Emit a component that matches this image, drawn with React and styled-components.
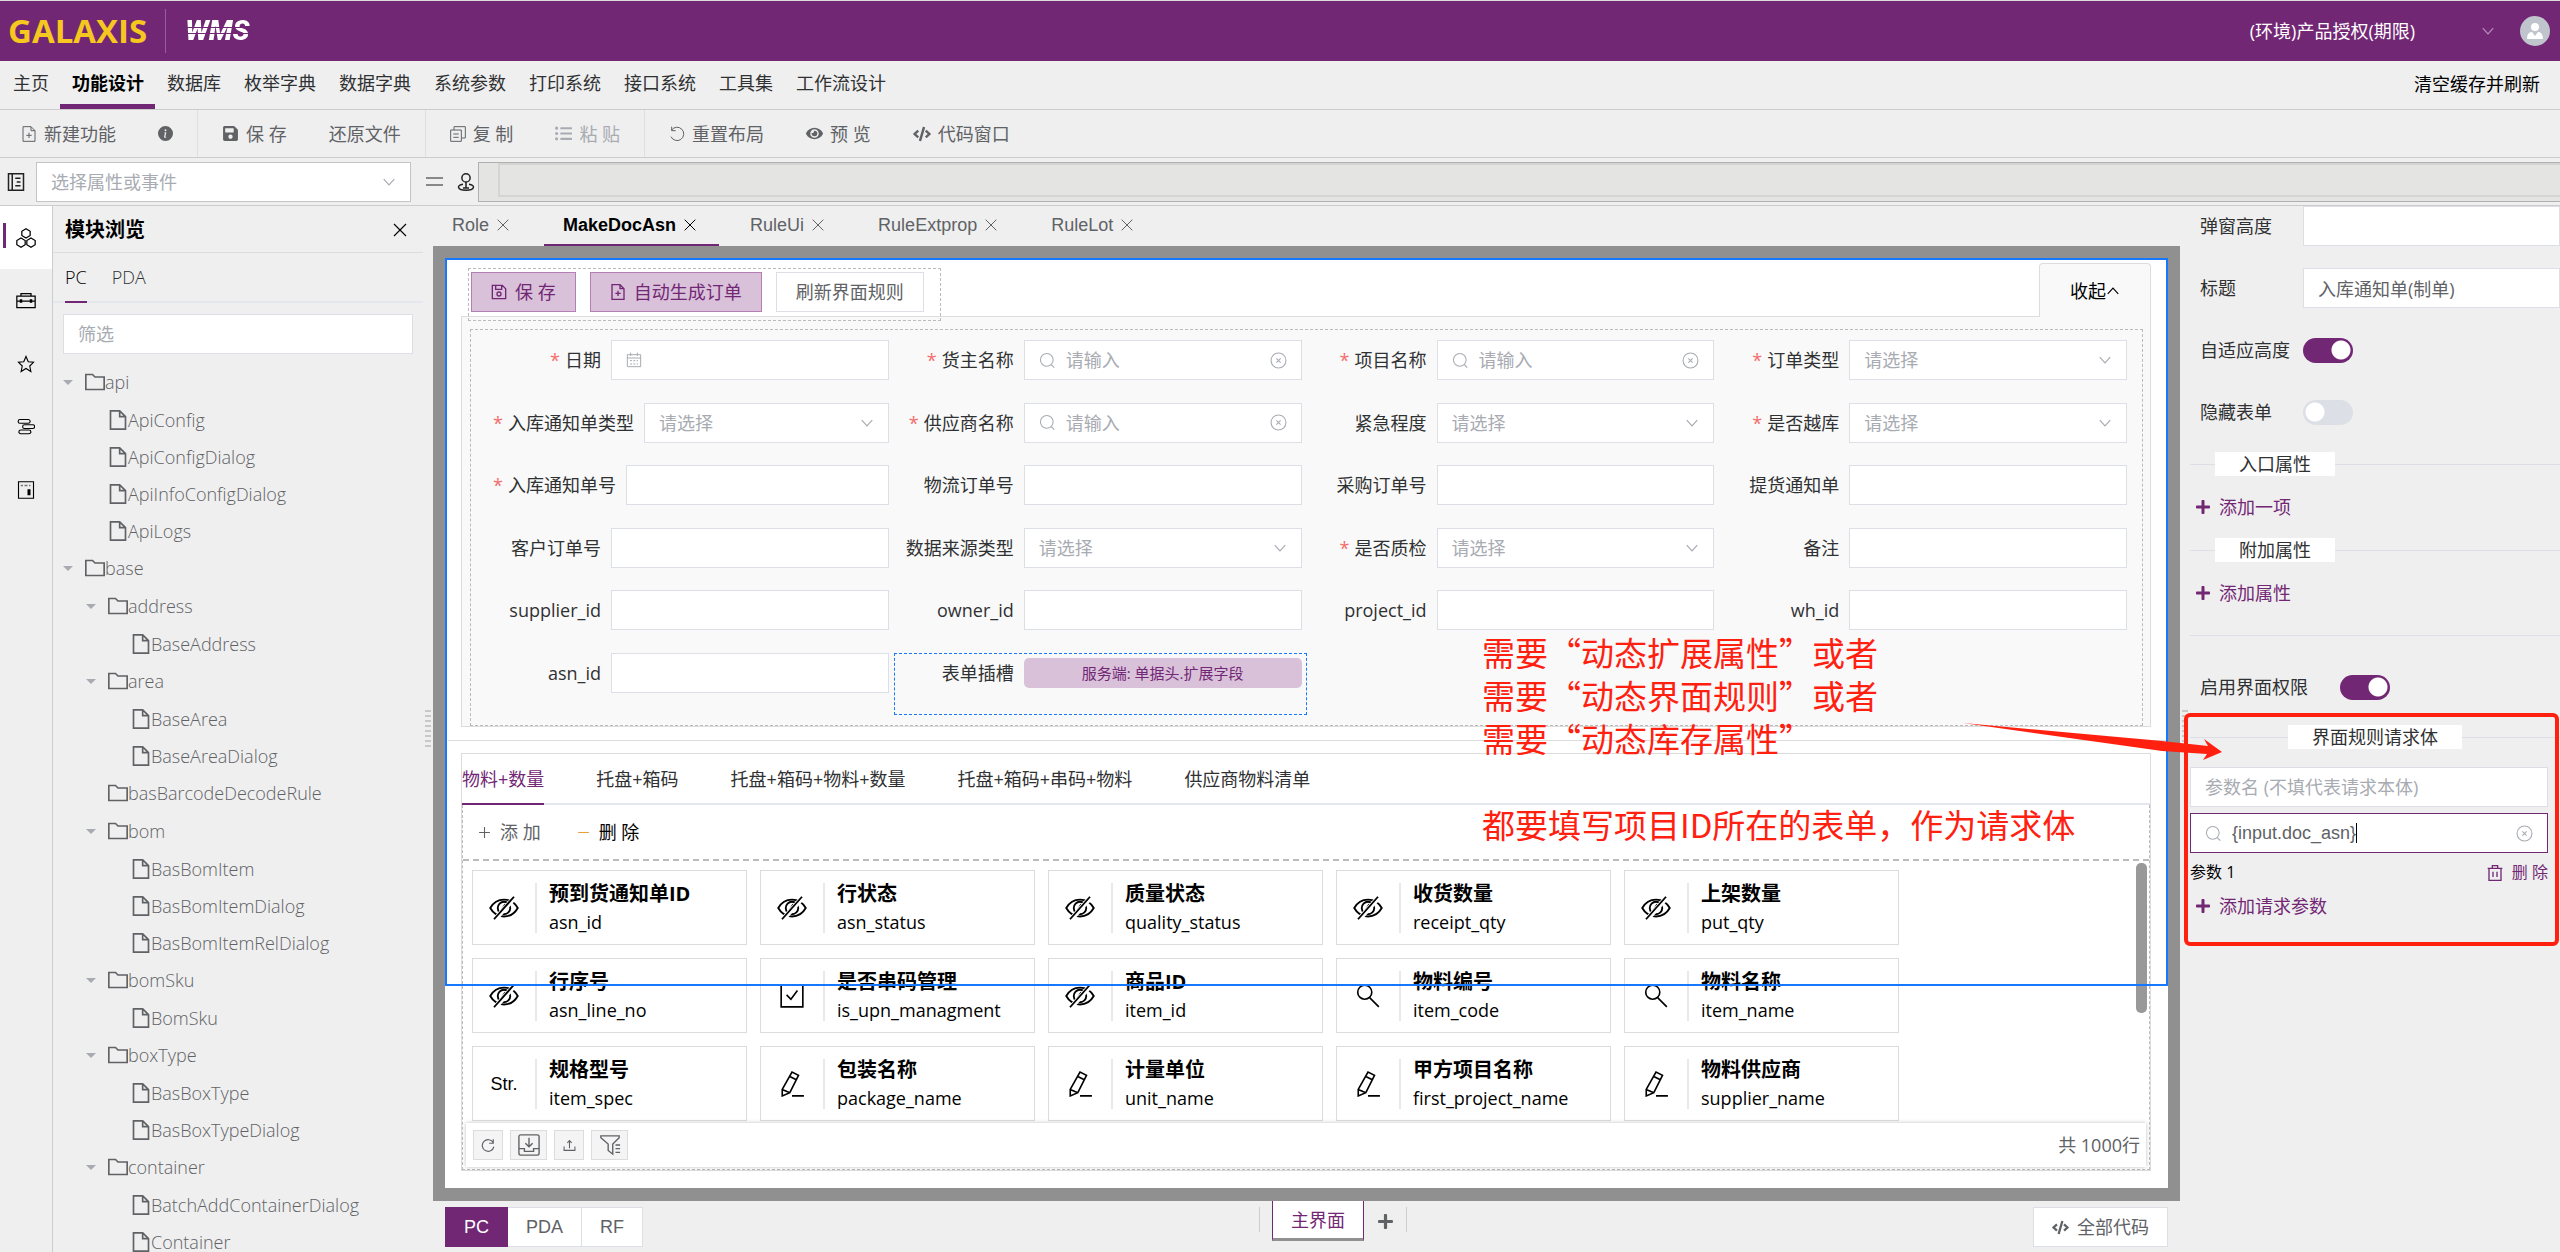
import React from "react";
import styled, { createGlobalStyle, css } from "styled-components";
import { FaCode, FaEye, FaListUl, FaPlus, FaSave } from "react-icons/fa";
import { BsInfoCircleFill } from "react-icons/bs";

const colors = {
  primary: "#722775",
  primaryLight: "#d9c1da",
  primaryBorder: "#b37fb5",
  page: "#efefef",
  line: "#cccccc",
  soft: "#dcdfe6",
  text: "#303133",
  muted: "#606266",
  hint: "#a8abb2",
  select: "#1677ff",
  note: "#ff2010",
};

/* ---------- styles ---------- */

const GlobalStyle = createGlobalStyle`
  * {
    box-sizing: border-box;
  }
  body {
    margin: 0;
    overflow: hidden;
    background: ${colors.page};
    color: ${colors.text};
    font-family: "Open Sans", "Noto Sans CJK SC", sans-serif;
    font-size: 18px;
    line-height: 24px;
  }
  button,
  input,
  select {
    font: inherit;
    color: inherit;
    border-radius: 0;
  }
  button {
    cursor: pointer;
    white-space: nowrap;
  }
  a {
    color: inherit;
    text-decoration: none;
  }
  svg {
    display: block;
    flex: none;
  }
`;

const Page = styled.div`
  position: relative;
  display: flex;
  flex-direction: column;
  height: 100vh;
  overflow: hidden;
`;

const Header = styled.header`
  display: flex;
  align-items: center;
  flex: none;
  height: 61px;
  padding: 0 10px 0 8px;
  border-top: 1px solid #ddd;
  background: ${colors.primary};
  color: #fff;
`;

const Brand = styled.span`
  padding-right: 18px;
  margin-right: 19px;
  border-right: 1px solid #94609a;
  color: #f5c71f;
  font-size: 33px;
  font-weight: 700;
  line-height: 44px;
`;

const Product = styled.span`
  padding-right: 4px;
  font-family: Roboto, sans-serif;
  font-size: 28px;
  font-style: italic;
  font-weight: 900;
  line-height: 36px;
  background: linear-gradient(
    #fff 14px,
    transparent 14px,
    transparent 15px,
    #fff 15px,
    #fff 20px,
    transparent 20px,
    transparent 21px,
    #fff 21px
  );
  background-clip: text;
  -webkit-background-clip: text;
  color: transparent;
`;

const Environment = styled.div`
  display: flex;
  align-items: center;
  gap: 66px;
  margin-left: auto;
  margin-right: 25px;

  svg {
    color: #b78fb9;
  }
`;

const Avatar = styled.div`
  display: flex;
  align-items: center;
  justify-content: center;
  width: 30px;
  height: 30px;
  border-radius: 50%;
  background: #c0c4cc;
`;

const Nav = styled.nav`
  display: flex;
  flex: none;
  height: 49px;
  padding-left: 1px;
  border-bottom: 1px solid ${colors.line};
`;

const NavLink = styled.a`
  padding: 10px 11px 0 12px;
  ${({ $active }) =>
    $active &&
    css`
      border-bottom: 5px solid ${colors.primary};
      color: #000;
      font-weight: 700;
    `}
`;

const ClearCache = styled.a`
  margin-left: auto;
  padding: 11px 20px 0 0;
  color: #000;
`;

const ToolbarRow = styled.div`
  display: flex;
  flex: none;
  height: 48px;
  border-bottom: 1px solid ${colors.line};
`;

const ToolGroup = styled.div`
  display: flex;
  padding: 0 3px;
  border-right: 1px solid ${colors.soft};

  &:first-child {
    padding-left: 0;
  }
  &:last-child {
    border-right: 0;
  }
`;

const Tool = styled.button`
  display: flex;
  align-items: center;
  gap: 7px;
  padding: 0 21px;
  border: 0;
  background: none;
  color: ${colors.muted};

  &:disabled {
    color: ${colors.hint};
  }
`;

const borderColor = ({ $dark, $focus }) => {
  if ($focus) return colors.primary;
  return $dark ? "#c4c4c4" : colors.soft;
};

const Control = styled.div`
  display: flex;
  align-items: center;
  flex: 1;
  min-width: 0;
  gap: 10px;
  height: 40px;
  padding: 0 14px;
  border: 1px solid ${borderColor};
  background: #fff;
  color: ${colors.hint};

  input,
  select {
    flex: 1;
    min-width: 0;
    height: 100%;
    padding: 0;
    border: 0;
    outline: 0;
    background: none;
    appearance: none;
  }
  input {
    color: ${colors.muted};
  }
  input::placeholder {
    color: ${colors.hint};
  }
`;

const Formula = styled.div`
  display: flex;
  align-items: center;
  flex: none;
  height: 48px;
  padding-left: 7px;
  border-bottom: 1px solid ${colors.line};
  color: #222;
`;

const FormulaSelect = styled.div`
  display: flex;
  width: 375px;
  margin: 0 15px 0 11px;
`;

const Equals = styled.i`
  width: 17px;
  height: 9px;
  margin-right: 14px;
  border: solid #888;
  border-width: 2px 0;
`;

const Editor = styled.div`
  flex: 1;
  height: 40px;
  margin-left: 3px;
  padding-left: 19px;
  border: 1px solid #b0b0b0;
  border-right: 0;
  background: #e4e4e2;

  input {
    display: block;
    width: 100%;
    height: 34px;
    border: 2px solid #d4d4d4;
    border-right: 0;
    background: none;
  }
`;

const Body = styled.div`
  display: flex;
  flex: 1;
  min-height: 0;
`;

const Rail = styled.aside`
  flex: none;
  width: 53px;
  border-right: 1px solid ${colors.line};
`;

const RailButton = styled.button`
  display: flex;
  align-items: center;
  justify-content: center;
  width: 100%;
  height: 63px;
  padding: 0;
  border: 0;
  background: ${({ $active }) =>
    $active
      ? `linear-gradient(${colors.primary}, ${colors.primary}) 3px 17px / 3px 25px no-repeat #fff`
      : "none"};
  color: #000;
`;

const Modules = styled.section`
  flex: none;
  width: 370px;
  overflow: hidden;
`;

const TextButton = styled.button`
  display: flex;
  align-items: center;
  gap: 9px;
  padding: 0;
  border: 0;
  background: none;
  color: ${({ $color }) => $color || colors.muted};
`;

const ModulesHead = styled.header`
  display: flex;
  align-items: center;
  justify-content: space-between;
  height: 47px;
  padding: 2px 14px 0 12px;
  border-bottom: 1px solid #ddd;
  color: #000;
  font-size: 20px;
  font-weight: 700;
`;

const ModuleTabs = styled.div`
  display: flex;
  gap: 25px;
  height: 50px;
  padding-left: 12px;
  box-shadow: inset 0 -2px #e4e7ed;
  font-weight: 300;
`;

const ModuleTab = styled.button`
  padding: 0;
  border: 0;
  border-bottom: 2px solid ${({ $active }) => ($active ? colors.primary : "transparent")};
  background: none;
  color: ${({ $active }) => ($active ? "#000" : colors.text)};
`;

const Filter = styled.div`
  display: flex;
  padding: 11px 10px 0;
`;

const Tree = styled.ul`
  margin: 0;
  padding: 9px 0 0 10px;
  list-style: none;
  color: ${colors.muted};
  font-weight: 300;
`;

const TreeNode = styled.li`
  display: flex;
  align-items: center;
  height: ${({ $folder }) => ($folder ? 38 : 37)}px;
  padding-left: ${({ $depth }) => $depth * 23}px;
`;

const Arrow = styled.i`
  width: 10px;
  margin-right: 12px;
  border: 5px solid transparent;
  border-bottom: 0;
  border-top-color: ${({ $open }) => ($open ? colors.hint : "transparent")};
`;

const Splitter = styled.div`
  display: flex;
  flex: none;
  align-items: center;
  justify-content: center;
  width: 10px;
`;

const Grip = styled.i`
  width: 6px;
  height: 38px;
  background: repeating-linear-gradient(#c8c8c8 0 2px, transparent 2px 5px);
`;

const Center = styled.main`
  display: flex;
  flex: 1;
  flex-direction: column;
  min-width: 0;
`;

const DocTabs = styled.div`
  display: flex;
  flex: none;
  gap: 12px;
  height: 40px;
  font-family: "Liberation Sans", sans-serif;
`;

const DocTab = styled.button`
  display: flex;
  align-items: center;
  gap: 6px;
  padding: 0 21px 2px 19px;
  border: 0;
  background: none;
  color: ${colors.muted};
  ${({ $active }) =>
    $active &&
    css`
      padding-bottom: 0;
      border-bottom: 2px solid ${colors.primary};
      color: #000;
      font-weight: 700;
    `}
`;

const Stage = styled.div`
  display: flex;
  flex: 1;
  min-height: 0;
  padding: 12px 12px 13px;
  background: #909090;
`;

const Canvas = styled.div`
  position: relative;
  display: flex;
  flex: 1;
  flex-direction: column;
  min-width: 0;
  padding: 5px 17px 17px 16px;
  background: #fff;
`;

const SelectionOutline = styled.div`
  position: absolute;
  top: 0;
  left: 0;
  right: 0;
  height: 728px;
  border: 2px solid ${colors.select};
  pointer-events: none;
`;

const FormHead = styled.div`
  display: flex;
  flex: none;
  justify-content: space-between;
  height: 53px;
`;

const FormActions = styled.div`
  position: relative;
  z-index: 1;
  display: flex;
  gap: 14px;
  height: 53px;
  margin: 5px 0 0 7px;
  padding: 3px 16px 8px 2px;
  border: 1px dashed #bbb;
`;

const Button = styled.button`
  display: flex;
  align-items: center;
  gap: 8px;
  padding: 0 19px;
  border: 1px solid ${({ $primary }) => ($primary ? colors.primaryBorder : colors.soft)};
  background: ${({ $primary }) => ($primary ? colors.primaryLight : "#fff")};
  color: ${({ $primary }) => ($primary ? colors.primary : colors.muted)};
`;

const Collapse = styled.button`
  position: relative;
  z-index: 1;
  display: flex;
  align-items: center;
  justify-content: center;
  width: 112px;
  height: 54px;
  border: 1px solid #dcdcdc;
  border-bottom: 0;
  border-radius: 4px 4px 0 0;
  background: #f9f9f9;
  color: #000;
`;

const FormBody = styled.div`
  flex: none;
  padding: 12px 7px 0 8px;
  border: 1px solid #dcdcdc;
  background: #f9f9f9;
`;

const Form = styled.form`
  display: grid;
  grid-template-columns: repeat(4, 1fr);
  grid-template-rows: repeat(6, 1fr);
  height: 397px;
  padding: 10px;
  border: 1px dashed #bbb;
`;

const Field = styled.div`
  display: flex;
  align-items: flex-start;
  min-width: 0;
  padding: 0 5px;
  ${({ $slot }) =>
    $slot &&
    css`
      outline: 1px dashed ${colors.select};
      outline-offset: -1px;
    `}
`;

const Label = styled.label`
  flex: none;
  min-width: 125px;
  padding: 0 10px 0 7px;
  line-height: 40px;
  text-align: right;
  white-space: nowrap;

  &::before {
    content: ${({ $required }) => ($required ? '"*"' : "none")};
    margin-right: 5px;
    color: #f56c6c;
  }
`;

const Slot = styled.div`
  flex: 1;
  height: 30px;
  margin-top: 5px;
  border-radius: 5px;
  background: ${colors.primaryLight};
  color: ${colors.primary};
  font-size: 15px;
  line-height: 30px;
  text-align: center;
`;

const Separator = styled.hr`
  flex: none;
  width: auto;
  height: 1px;
  margin: 13px -17px 12px -13px;
  border: 0;
  background: #dcdcdc;
`;

const Grid = styled.section`
  display: flex;
  flex: 1;
  flex-direction: column;
  min-height: 0;
  border: 1px solid #dcdcdc;
`;

const GridTabs = styled.div`
  display: flex;
  flex: none;
  gap: 52px;
  height: 51px;
  box-shadow: inset 0 -2px #e4e7ed;
`;

const GridTab = styled.button`
  padding: 0;
  border: 0;
  border-bottom: 2px solid ${({ $active }) => ($active ? colors.primary : "transparent")};
  background: none;
  color: ${({ $active }) => ($active ? colors.primary : colors.text)};
`;

const GridBody = styled.div`
  display: flex;
  flex: 1;
  flex-direction: column;
  min-height: 0;
  border: 1px dashed #bbb;
  border-top: 0;
`;

const GridTools = styled.div`
  display: flex;
  flex: none;
  gap: 36px;
  height: 56px;
  padding-left: 15px;
  border-bottom: 2px dashed #bbb;
`;

const Minus = styled.span`
  color: #e6a23c;
`;

const Cards = styled.div`
  position: relative;
  display: grid;
  flex: 1;
  grid-template-columns: repeat(5, 275px);
  grid-auto-rows: 75px;
  gap: 13px;
  min-height: 0;
  padding: 9px;
  overflow: hidden;
`;

const Card = styled.article`
  display: flex;
  align-items: center;
  border: 1px solid #dcdcdc;
  color: #000;
`;

const CardIcon = styled.div`
  display: flex;
  align-items: center;
  justify-content: center;
  width: 62px;
  font-family: "Liberation Sans", sans-serif;
`;

const CardText = styled.div`
  display: flex;
  flex-direction: column;
  justify-content: center;
  height: 50px;
  padding-left: 12px;
  border-left: 2px solid #e8e8e8;
  line-height: 29px;
  white-space: nowrap;

  b {
    font-size: 20px;
  }
`;

const Thumb = styled.i`
  position: absolute;
  top: 2px;
  right: 2px;
  width: 11px;
  height: 150px;
  border-radius: 5px;
  background: #999;
`;

const GridFoot = styled.footer`
  position: relative;
  display: flex;
  align-items: center;
  flex: none;
  gap: 7px;
  height: 44px;
  margin: 0 3px 2px;
  padding: 0 6px 0 7px;
  background: #fff;
  box-shadow: 0 0 4px rgba(0, 0, 0, 0.25);
`;

const FootButton = styled.button`
  display: flex;
  align-items: center;
  justify-content: center;
  width: ${({ $wide }) => ($wide ? 37 : 30)}px;
  height: 30px;
  padding: 0;
  border: 1px solid #dcdcdc;
  background: #f4f4f4;
  color: ${colors.muted};
`;

const Total = styled.span`
  margin-left: auto;
  color: ${colors.muted};
`;

const Bottom = styled.footer`
  display: flex;
  flex: none;
  align-items: flex-start;
  height: 51px;
  padding: 0 12px;
`;

const Device = styled.button`
  height: 40px;
  margin: 6px 0 0;
  padding: 0 18px;
  border: 1px solid ${({ $active }) => ($active ? colors.primary : colors.soft)};
  border-left-width: ${({ $active }) => ($active ? 1 : 0)}px;
  background: ${({ $active }) => ($active ? colors.primary : "#fff")};
  color: ${({ $active }) => ($active ? "#fff" : colors.muted)};
  font-family: "Liberation Sans", sans-serif;
`;

const Views = styled.div`
  display: flex;
  align-items: center;
  gap: 13px;
  margin: 0 auto;
  padding: 0 13px;
  background:
    linear-gradient(${colors.line}, ${colors.line}) 0 6px / 1px 25px no-repeat,
    linear-gradient(${colors.line}, ${colors.line}) 100% 6px / 1px 25px no-repeat;
`;

const ViewTab = styled.button`
  height: 40px;
  padding: 0 18px;
  border: 1px solid ${colors.primary};
  border-width: 0 1px;
  border-bottom: 3px solid #909090;
  background: #fff;
  color: ${colors.primary};
`;

const AllCode = styled.button`
  display: flex;
  align-items: center;
  gap: 8px;
  height: 40px;
  margin: 6px 0 0 10px;
  padding: 0 18px;
  border: 1px solid ${colors.soft};
  background: #fff;
  color: ${colors.muted};
`;

const Inspector = styled.aside`
  flex: none;
  width: 370px;
`;

const PropRow = styled.div`
  display: flex;
  align-items: center;
  height: 40px;
  margin-bottom: 22px;

  label {
    flex: none;
    width: ${({ $wide }) => ($wide ? 150 : 113)}px;
    padding-left: 10px;
  }
`;

const Switch = styled.input`
  appearance: none;
  width: 50px;
  height: 25px;
  margin: 0;
  border-radius: 13px;
  background: radial-gradient(circle at 12px 12px, #fff 9px, transparent 10px) ${colors.soft};

  &:checked {
    background: radial-gradient(circle at 38px 12px, #fff 9px, transparent 10px)
      ${colors.primary};
  }
`;

const Extras = styled.div`
  margin-top: -2px;
`;

const Divider = styled.div`
  display: flex;
  align-items: center;
  height: 24px;

  &::before,
  &::after {
    content: "";
    flex: 1;
    height: 1px;
    background: ${colors.soft};
  }
  &::before {
    flex: ${({ $center }) => ($center ? "1" : "0 0 25px")};
  }
  span {
    padding: 0 24px;
    background: #fff;
  }
`;

const AddButton = styled.button`
  display: flex;
  align-items: center;
  gap: 8px;
  height: ${({ $tight }) => ($tight ? 40 : 62)}px;
  padding: 0 5px;
  border: 0;
  background: none;
  color: ${colors.primary};
`;

const Rule = styled.hr`
  height: 1px;
  margin: 11px 0 31px;
  border: 0;
  background: ${colors.soft};
`;

const Request = styled.div`
  position: relative;
  margin-top: -4px;
`;

const RequestFields = styled.div`
  display: flex;
  flex-direction: column;
  gap: 6px;
  padding: 18px 12px 0 0;

  ${Control} {
    flex: none;
  }
`;

const Expression = styled.input`
  && {
    flex: none;
    field-sizing: content;
    font-family: "Liberation Sans", sans-serif;
  }
`;

const Caret = styled.i`
  width: 1px;
  height: 20px;
  margin: 0 auto 0 -10px;
  background: #000;
`;

const Param = styled.div`
  display: flex;
  justify-content: space-between;
  height: 27px;
  color: #000;
  font-size: 16px;
  line-height: 27px;
`;

const Highlight = styled.div`
  position: absolute;
  top: -12px;
  left: -6px;
  right: 1px;
  height: 233px;
  border: 4px solid ${colors.note};
  border-radius: 6px;
  pointer-events: none;
`;

const Note = styled.div`
  position: absolute;
  top: 631px;
  left: 1482px;
  color: ${colors.note};
  font-family: "Noto Sans CJK SC", sans-serif;
  font-size: 33px;
  line-height: 43px;
  white-space: nowrap;
  pointer-events: none;

  p {
    margin: 0;
  }
  p:last-child {
    margin-top: 43px;
  }
`;

const Pointer = styled.svg`
  position: absolute;
  top: 721px;
  left: 1962px;
  pointer-events: none;
`;

/* ---------- icons ---------- */

const shapes = {
  close: <path d="M4 4l16 16M20 4L4 20" />,
  down: <path d="M3 7l9 10 9-10" />,
  up: <path d="M3 17l9-10 9 10" />,
  plus: <path d="M12 2v20M2 12h20" />,
  minus: <path d="M2 12h20" />,
  search: (
    <>
      <circle cx="11" cy="11" r="9" />
      <path d="M17.500 18l4 4" />
    </>
  ),
  lens: (
    <>
      <circle cx="9" cy="8.500" r="6.500" />
      <path d="M13.500 13.500l8.500 8.500" />
    </>
  ),
  clear: (
    <>
      <circle cx="12" cy="12" r="10.500" />
      <path d="M9 9l6 6M15 9l-6 6" />
    </>
  ),
  calendar: (
    <>
      <path d="M2 4h20v18H2zM2 9h20M7 1v5M17 1v5" />
      <path d="M6 13h3M11 13h3M16 13h2M6 18h3M11 18h3M16 18h2" />
    </>
  ),
  fileAdd: (
    <>
      <path d="M3 1h12l6 6v16H3zM15 1v6h6" />
      <path d="M12 10v8M8 14h8" />
    </>
  ),
  file: <path d="M3 1h11l7 7v15H3zM14 1v7h7" />,
  folder: <path d="M1 3h8l3 3h11v15H1z" />,
  copy: (
    <>
      <path d="M1 6h16v17H1zM6 6V1h17v17h-6" />
      <path d="M5 12h8M5 17h8" />
    </>
  ),
  undo: <path d="M4 6a10 10 0 1 1-1 10M4 1v6h6" />,
  refresh: <path d="M21 8a10 10 0 1 0 1 7M21 2v7h-7" />,
  saveOutline: (
    <>
      <path d="M2 2h15l5 5v15H2zM7 2v6h9V2" />
      <circle cx="12" cy="15" r="3" />
    </>
  ),
  book: (
    <>
      <path d="M2 1h20v22H2zM7 1v22" />
      <path d="M11 7h7M13 12h5M11 17h7" />
    </>
  ),
  stamp: (
    <>
      <circle cx="12" cy="6.500" r="5.500" />
      <path d="M12 12v8M8 15c-9 1-8 8 4 8s13-7 4-8M8 20h8" />
    </>
  ),
  modules: (
    <path d="M12 1l5 3v5l-5 3-5-3V4zM6 12l5 3v5l-5 3-5-3v-5zM18 12l5 3v5l-5 3-5-3v-5z" />
  ),
  toolbox: (
    <>
      <path d="M1 6h22v14H1zM6 6V3h12v3M1 12h22" />
      <path d="M6 10v4M18 10v4" strokeWidth="3" />
    </>
  ),
  star: <path d="M12 2l3 7 7 .7-5 5 1.500 7.300L12 18l-6.500 4L7 14.700l-5-5L9 9z" />,
  layers: (
    <path d="M4 2h11a2 2 0 0 1 0 5H4a2 2 0 0 1 0-5zM10 9h11a2 2 0 0 1 0 5H10a2 2 0 0 1 0-5zM5 16h11a2 2 0 0 1 0 5H5a2 2 0 0 1 0-5z" />
  ),
  api: (
    <>
      <path d="M2 1h20v22H2z" />
      <path d="M5 6h3M10 6h4M16 6h2" strokeWidth="2" stroke="#777" />
      <path d="M16 11v8" strokeWidth="4" />
    </>
  ),
  hidden: (
    <>
      <path d="M1 12c5-9 17-9 22 0-5 9-17 9-22 0z" />
      <circle cx="12" cy="12" r="5" />
      <path d="M13 9l-3 5" />
      <path d="M21 3L4 22" stroke="#fff" strokeWidth="4" />
      <path d="M20 3L4 21" />
    </>
  ),
  check: <path d="M2 2h20v20H2zM7 11l4 4 6-8" />,
  pencil: <path d="M3 17L12 1l6 3-8 16-7 3zM10 5l6 3M3 17l7 3M12 23h11" />,
  inbox: (
    <>
      <path d="M3 1h18a2 2 0 0 1 2 2v18a2 2 0 0 1-2 2H3a2 2 0 0 1-2-2V3a2 2 0 0 1 2-2z" />
      <path d="M1 16h6v3h10v-3h6M12 4v10M8 10l4 4 4-4" />
    </>
  ),
  upload: <path d="M2 14v7h20v-7M12 17V3M8 7l4-4 4 4" />,
  funnel: <path d="M2 2h20v2l-7 7v11l-5-4v-7L2 4zM18 12h5M18 16h5M18 20h5" />,
  trash: <path d="M1 5h22M8 5V1h8v4M3 5v18h18V5M9 10v8M15 10v8" />,
};

const Icon = ({ name, size = 16, weight = 1.5 }) => (
  <svg
    width={size}
    height={size}
    viewBox="0 0 24 24"
    fill="none"
    stroke="currentColor"
    strokeWidth={weight}
    aria-hidden="true"
  >
    {shapes[name]}
  </svg>
);

/* ---------- data ---------- */

const navItems = [
  "主页",
  "功能设计",
  "数据库",
  "枚举字典",
  "数据字典",
  "系统参数",
  "打印系统",
  "接口系统",
  "工具集",
  "工作流设计",
];

const railItems = ["modules", "toolbox", "star", "layers", "api"];

const tree = [
  ["api", 0, "open"],
  ["ApiConfig", 1],
  ["ApiConfigDialog", 1],
  ["ApiInfoConfigDialog", 1],
  ["ApiLogs", 1],
  ["base", 0, "open"],
  ["address", 1, "open"],
  ["BaseAddress", 2],
  ["area", 1, "open"],
  ["BaseArea", 2],
  ["BaseAreaDialog", 2],
  ["basBarcodeDecodeRule", 1, "empty"],
  ["bom", 1, "open"],
  ["BasBomItem", 2],
  ["BasBomItemDialog", 2],
  ["BasBomItemRelDialog", 2],
  ["bomSku", 1, "open"],
  ["BomSku", 2],
  ["boxType", 1, "open"],
  ["BasBoxType", 2],
  ["BasBoxTypeDialog", 2],
  ["container", 1, "open"],
  ["BatchAddContainerDialog", 2],
  ["Container", 2],
];

const docTabs = ["Role", "MakeDocAsn", "RuleUi", "RuleExtprop", "RuleLot"];

const fields = [
  { id: "date", label: "日期", type: "date", required: true },
  { id: "owner", label: "货主名称", type: "search", required: true },
  { id: "project", label: "项目名称", type: "search", required: true },
  { id: "orderType", label: "订单类型", type: "select", required: true },
  { id: "asnType", label: "入库通知单类型", type: "select", required: true },
  { id: "supplier", label: "供应商名称", type: "search", required: true },
  { id: "urgency", label: "紧急程度", type: "select" },
  { id: "crossDock", label: "是否越库", type: "select", required: true },
  { id: "asnNo", label: "入库通知单号", type: "text", required: true },
  { id: "logisticsNo", label: "物流订单号", type: "text" },
  { id: "purchaseNo", label: "采购订单号", type: "text" },
  { id: "pickupNo", label: "提货通知单", type: "text" },
  { id: "customerNo", label: "客户订单号", type: "text" },
  { id: "sourceType", label: "数据来源类型", type: "select" },
  { id: "inspect", label: "是否质检", type: "select", required: true },
  { id: "remark", label: "备注", type: "text" },
  { id: "supplier_id", label: "supplier_id", type: "text" },
  { id: "owner_id", label: "owner_id", type: "text" },
  { id: "project_id", label: "project_id", type: "text" },
  { id: "wh_id", label: "wh_id", type: "text" },
  { id: "asn_id", label: "asn_id", type: "text" },
  { id: "slot", label: "表单插槽", type: "slot" },
];

const gridTabs = [
  "物料+数量",
  "托盘+箱码",
  "托盘+箱码+物料+数量",
  "托盘+箱码+串码+物料",
  "供应商物料清单",
];

const columns = [
  ["预到货通知单ID", "asn_id", "hidden"],
  ["行状态", "asn_status", "hidden"],
  ["质量状态", "quality_status", "hidden"],
  ["收货数量", "receipt_qty", "hidden"],
  ["上架数量", "put_qty", "hidden"],
  ["行序号", "asn_line_no", "hidden"],
  ["是否串码管理", "is_upn_managment", "check"],
  ["商品ID", "item_id", "hidden"],
  ["物料编号", "item_code", "lens"],
  ["物料名称", "item_name", "lens"],
  ["规格型号", "item_spec", "string"],
  ["包装名称", "package_name", "pencil"],
  ["计量单位", "unit_name", "pencil"],
  ["甲方项目名称", "first_project_name", "pencil"],
  ["物料供应商", "supplier_name", "pencil"],
];

/* ---------- components ---------- */

const SelectBox = ({ id, label, placeholder = "请选择", dark }) => (
  <Control $dark={dark}>
    <select id={id} aria-label={label} defaultValue="">
      <option value="">{placeholder}</option>
    </select>
    <Icon name="down" size={14} weight={2} />
  </Control>
);

const FieldControl = ({ field }) => {
  if (field.type === "slot") return <Slot>服务端: 单据头.扩展字段</Slot>;
  if (field.type === "select") return <SelectBox id={field.id} />;
  if (field.type === "search") {
    return (
      <Control>
        <Icon name="search" size={17} />
        <input id={field.id} placeholder="请输入" />
        <Icon name="clear" size={17} />
      </Control>
    );
  }
  return (
    <Control>
      {field.type === "date" && <Icon name="calendar" size={16} />}
      <input id={field.id} />
    </Control>
  );
};

const Toolbar = () => (
  <ToolbarRow>
    <ToolGroup>
      <Tool>
        <Icon name="fileAdd" />
        新建功能
      </Tool>
      <Tool aria-label="说明">
        <BsInfoCircleFill size={15} />
      </Tool>
    </ToolGroup>
    <ToolGroup>
      <Tool>
        <FaSave size={17} />保 存
      </Tool>
      <Tool>还原文件</Tool>
    </ToolGroup>
    <ToolGroup>
      <Tool>
        <Icon name="copy" />复 制
      </Tool>
      <Tool disabled>
        <FaListUl size={17} />粘 贴
      </Tool>
    </ToolGroup>
    <ToolGroup>
      <Tool>
        <Icon name="undo" />
        重置布局
      </Tool>
      <Tool>
        <FaEye size={17} />预 览
      </Tool>
      <Tool>
        <FaCode size={18} />
        代码窗口
      </Tool>
    </ToolGroup>
  </ToolbarRow>
);

const ModulePanel = () => (
  <Modules>
    <ModulesHead>
      模块浏览
      <TextButton aria-label="关闭" $color="#000">
        <Icon name="close" size={18} />
      </TextButton>
    </ModulesHead>
    <ModuleTabs>
      <ModuleTab $active>PC</ModuleTab>
      <ModuleTab>PDA</ModuleTab>
    </ModuleTabs>
    <Filter>
      <Control>
        <input aria-label="筛选" placeholder="筛选" />
      </Control>
    </Filter>
    <Tree>
      {tree.map(([name, depth, folder]) => (
        <TreeNode key={name} $depth={depth} $folder={folder}>
          <Arrow $open={folder === "open"} />
          <Icon name={folder ? "folder" : "file"} size={20} weight={2} />
          {name}
        </TreeNode>
      ))}
    </Tree>
  </Modules>
);

const FormPanel = () => (
  <>
    <FormHead>
      <FormActions>
        <Button $primary>
          <Icon name="saveOutline" weight={2} />保 存
        </Button>
        <Button $primary>
          <Icon name="fileAdd" weight={2} />
          自动生成订单
        </Button>
        <Button>刷新界面规则</Button>
      </FormActions>
      <Collapse>
        收起
        <Icon name="up" size={14} weight={2} />
      </Collapse>
    </FormHead>
    <FormBody>
      <Form>
        {fields.map((field) => (
          <Field key={field.id} $slot={field.type === "slot"}>
            <Label htmlFor={field.id} $required={field.required}>
              {field.label}
            </Label>
            <FieldControl field={field} />
          </Field>
        ))}
      </Form>
    </FormBody>
  </>
);

const GridPanel = () => (
  <Grid>
    <GridTabs>
      {gridTabs.map((tab, i) => (
        <GridTab key={tab} $active={i === 0}>
          {tab}
        </GridTab>
      ))}
    </GridTabs>
    <GridBody>
      <GridTools>
        <TextButton>
          <Icon name="plus" size={13} weight={2} />添 加
        </TextButton>
        <TextButton $color="#000">
          <Minus>
            <Icon name="minus" size={13} weight={2} />
          </Minus>
          删 除
        </TextButton>
      </GridTools>
      <Cards>
        {columns.map(([title, name, icon]) => (
          <Card key={name}>
            <CardIcon>
              {icon === "string" ? (
                "Str."
              ) : (
                <Icon name={icon} size={icon === "hidden" ? 30 : 26} />
              )}
            </CardIcon>
            <CardText>
              <b>{title}</b>
              <span>{name}</span>
            </CardText>
          </Card>
        ))}
        <Thumb />
      </Cards>
      <GridFoot>
        <FootButton aria-label="刷新">
          <Icon name="refresh" size={14} weight={2} />
        </FootButton>
        <FootButton aria-label="导入" $wide>
          <Icon name="inbox" size={22} />
        </FootButton>
        <FootButton aria-label="导出">
          <Icon name="upload" size={13} weight={2} />
        </FootButton>
        <FootButton aria-label="筛选" $wide>
          <Icon name="funnel" size={22} />
        </FootButton>
        <Total>共 1000行</Total>
      </GridFoot>
    </GridBody>
  </Grid>
);

const Properties = () => (
  <Inspector>
    <PropRow>
      <label htmlFor="dialogHeight">弹窗高度</label>
      <Control>
        <input id="dialogHeight" />
      </Control>
    </PropRow>
    <PropRow>
      <label htmlFor="title">标题</label>
      <Control>
        <input id="title" defaultValue="入库通知单(制单)" />
      </Control>
    </PropRow>
    <PropRow>
      <label htmlFor="autoHeight">自适应高度</label>
      <Switch type="checkbox" id="autoHeight" defaultChecked />
    </PropRow>
    <PropRow>
      <label htmlFor="hideForm">隐藏表单</label>
      <Switch type="checkbox" id="hideForm" />
    </PropRow>
    <Extras>
      <Divider>
        <span>入口属性</span>
      </Divider>
      <AddButton>
        <FaPlus size={16} />
        添加一项
      </AddButton>
      <Divider>
        <span>附加属性</span>
      </Divider>
      <AddButton>
        <FaPlus size={16} />
        添加属性
      </AddButton>
    </Extras>
    <Rule />
    <PropRow $wide>
      <label htmlFor="permission">启用界面权限</label>
      <Switch type="checkbox" id="permission" defaultChecked />
    </PropRow>
    <Request>
      <Divider $center>
        <span>界面规则请求体</span>
      </Divider>
      <RequestFields>
        <Control>
          <input aria-label="参数名" placeholder="参数名 (不填代表请求本体)" />
        </Control>
        <Control $focus>
          <Icon name="search" size={17} />
          <Expression aria-label="参数值" defaultValue="{input.doc_asn}" />
          <Caret />
          <Icon name="clear" size={17} />
        </Control>
        <Param>
          参数 1
          <TextButton $color={colors.primary}>
            <Icon name="trash" weight={2} />删 除
          </TextButton>
        </Param>
      </RequestFields>
      <AddButton $tight>
        <FaPlus size={16} />
        添加请求参数
      </AddButton>
      <Highlight />
    </Request>
  </Inspector>
);

const App = () => (
  <Page>
    <GlobalStyle />
    <Header>
      <Brand>GALAXIS</Brand>
      <Product>WMS</Product>
      <Environment>
        (环境)产品授权(期限)
        <Icon name="down" size={14} weight={2} />
      </Environment>
      <Avatar>
        <svg width="18" height="18" viewBox="0 0 18 18" fill="#fff">
          <circle cx="9" cy="5" r="4" />
          <path d="M1 17c0-6 3-7 5-7l3 4 3-4c2 0 5 1 5 7z" />
        </svg>
      </Avatar>
    </Header>
    <Nav>
      {navItems.map((item) => (
        <NavLink key={item} href="#" $active={item === "功能设计"}>
          {item}
        </NavLink>
      ))}
      <ClearCache href="#">清空缓存并刷新</ClearCache>
    </Nav>
    <Toolbar />
    <Formula>
      <Icon name="book" size={18} weight={2} />
      <FormulaSelect>
        <SelectBox label="属性或事件" placeholder="选择属性或事件" dark />
      </FormulaSelect>
      <Equals />
      <Icon name="stamp" size={18} weight={2} />
      <Editor>
        <input aria-label="表达式" disabled />
      </Editor>
    </Formula>
    <Body>
      <Rail>
        {railItems.map((name, i) => (
          <RailButton key={name} aria-label={name} $active={i === 0}>
            <Icon name={name} size={i > 1 ? 18 : 20} />
          </RailButton>
        ))}
      </Rail>
      <ModulePanel />
      <Splitter>
        <Grip />
      </Splitter>
      <Center>
        <DocTabs>
          {docTabs.map((tab) => (
            <DocTab key={tab} $active={tab === "MakeDocAsn"}>
              {tab}
              <Icon name="close" size={16} />
            </DocTab>
          ))}
        </DocTabs>
        <Stage>
          <Canvas>
            <FormPanel />
            <Separator />
            <GridPanel />
            <SelectionOutline />
          </Canvas>
        </Stage>
        <Bottom>
          <Device $active>PC</Device>
          <Device>PDA</Device>
          <Device>RF</Device>
          <Views>
            <ViewTab>主界面</ViewTab>
            <TextButton aria-label="新增界面">
              <FaPlus size={17} />
            </TextButton>
          </Views>
          <AllCode>
            <FaCode size={17} />
            全部代码
          </AllCode>
        </Bottom>
      </Center>
      <Splitter>
        <Grip />
      </Splitter>
      <Properties />
    </Body>
    <Note>
      <p>需要“动态扩展属性”或者</p>
      <p>需要“动态界面规则”或者</p>
      <p>需要“动态库存属性”</p>
      <p>都要填写项目ID所在的表单，作为请求体</p>
    </Note>
    <Pointer width="262" height="40" viewBox="0 0 262 40">
      <path d="M1 2L200 20l46 5-4-7 18 13-19 8 4-6-45-3z" fill={colors.note} />
    </Pointer>
  </Page>
);

export default App;
